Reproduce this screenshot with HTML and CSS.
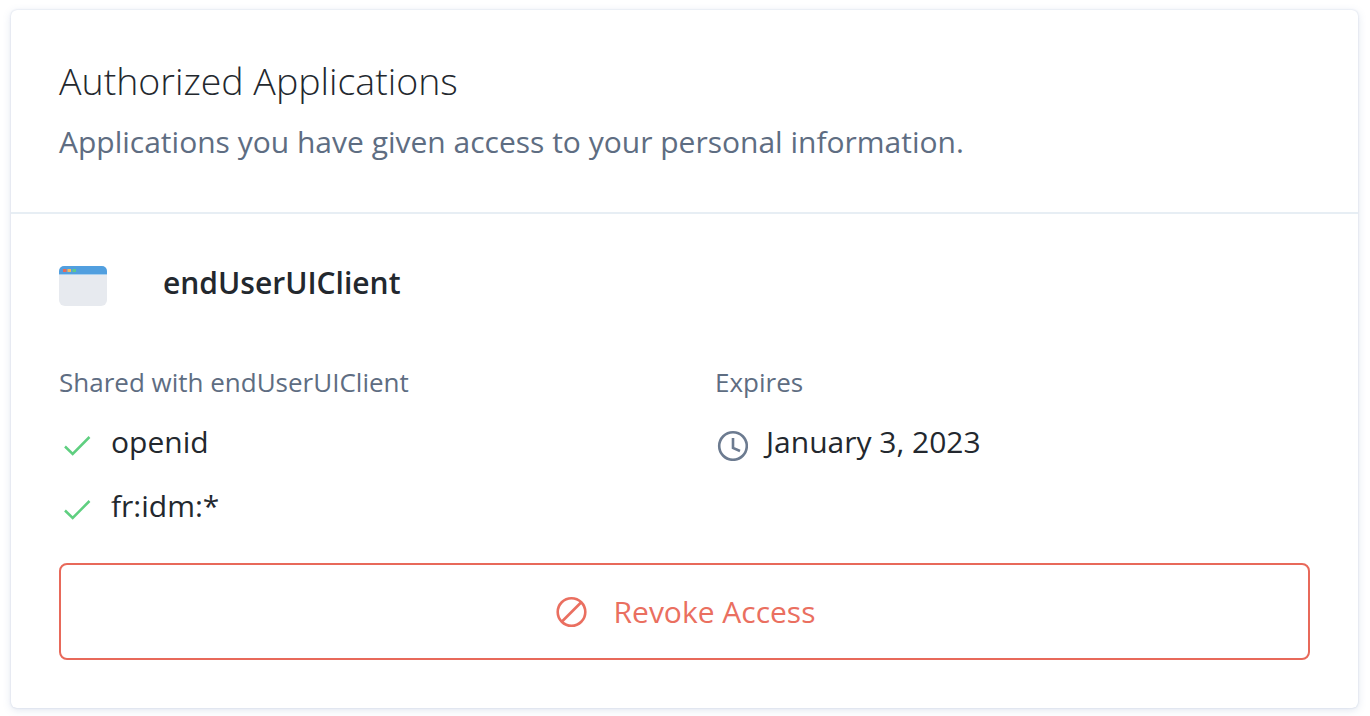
FILE: index.html
```html
<!DOCTYPE html>
<html>
    <head>
        <meta charset="utf-8">
        <title>Authorized Applications</title>
        <link rel="stylesheet" href="styles.css">
    </head>
    <body>
        <div class="card">
            <div class="card-header">
                <h1>Authorized Applications</h1>
                <p>Applications you have given access to your personal information.</p>
            </div>
            <div class="card-body">
                <div class="app">
                    <svg class="app-icon" width="48" height="40" viewBox="0 0 48 40">
                        <path fill="#e7eaef" d="M0 9h48v25a6 6 0 0 1-6 6H6a6 6 0 0 1-6-6z"/>
                        <path fill="#519fdf" d="M0 8.500V5a5 5 0 0 1 5-5h38a5 5 0 0 1 5 5v3.500z"/>
                        <rect x="4" y="3" width="3.500" height="3" fill="#e8695a"/>
                        <rect x="8.500" y="3" width="3.500" height="3" fill="#f0b75e"/>
                        <rect x="13.500" y="3" width="3.500" height="3" fill="#5fc98a"/>
                    </svg>
                    <h2>endUserUIClient</h2>
                </div>
                <div class="details">
                    <div class="col">
                        <div class="label">Shared with endUserUIClient</div>
                        <div class="row row-scope">
                            <svg class="check" width="32" height="30" viewBox="0 0 32 30"><path d="M6 19.500l7.700 7.500L30.500 10"/></svg>
                            <span>openid</span>
                        </div>
                        <div class="row row-scope">
                            <svg class="check" width="32" height="30" viewBox="0 0 32 30"><path d="M6 19.500l7.700 7.500L30.500 10"/></svg>
                            <span>fr:idm:*</span>
                        </div>
                    </div>
                    <div class="col">
                        <div class="label">Expires</div>
                        <div class="row row-date">
                            <svg class="clock" width="33" height="38" viewBox="0 0 33 38"><circle cx="18" cy="23" r="13.800"/><path d="M18 15v10l7 3"/></svg>
                            <span>January 3, 2023</span>
                        </div>
                    </div>
                </div>
                <button class="revoke">
                    <svg width="32" height="32" viewBox="0 0 32 32"><circle cx="15.500" cy="16" r="13.800"/><path d="M6 25.500l19-19"/></svg>
                    <span>Revoke Access</span>
                </button>
            </div>
        </div>
    </body>
</html>
```

FILE: styles.css
```css
body {
    margin: 0;
    background-color: #fff;
    color: #23282e;
    font-family: "Open Sans", sans-serif;
    padding: 10px 12px 8px 11px;
}
h1, h2, p {
    margin: 0;
}
.card {
    height: 698px;
    box-sizing: border-box;
    border-radius: 6px;
    background-color: #fff;
    box-shadow: 0 0 2px rgba(100, 125, 175, .28), 0 2px 8px rgba(100, 125, 175, .2);
}
.card-header {
    height: 204px;
    box-sizing: border-box;
    padding: 49px 48px 0;
    border-bottom: 2px solid #e7eef4;
}
.card-header h1 {
    font-size: 37.500px;
    font-weight: 300;
    line-height: 44px;
}
.card-header p {
    margin-top: 19px;
    font-size: 30px;
    line-height: 40px;
    color: #5e6d82;
}
.card-body {
    padding: 52px 48px 0;
}
.app {
    display: flex;
    align-items: flex-start;
    gap: 56px;
}
.app h2 {
    margin-top: -3px;
    font-size: 30px;
    font-weight: 600;
    line-height: 40px;
}
.details {
    display: flex;
    margin-top: 58px;
}
.col {
    flex: 0 0 656px;
}
.label {
    font-size: 26px;
    line-height: 36px;
    color: #5e6d82;
}
.row {
    display: flex;
    align-items: center;
    font-size: 30px;
    line-height: 40px;
}
.row-scope {
    gap: 20px;
    margin-top: 22px;
}
.row-date {
    gap: 18px;
    margin-top: 22px;
}
.row-scope + .row-scope {
    margin-top: 24px;
}
.check path {
    fill: none;
    stroke: #5fcf80;
    stroke-width: 2.500;
}
.clock circle, .clock path {
    fill: none;
    stroke: #6c7b90;
    stroke-width: 2.600;
}
.revoke {
    display: flex;
    align-items: center;
    justify-content: center;
    gap: 26px;
    width: 100%;
    height: 97px;
    margin-top: 37px;
    padding: 0 0 0 2px;
    border: 2px solid #e8695a;
    border-radius: 8px;
    background-color: #fff;
    color: #ea6f60;
    font-family: "Open Sans", sans-serif;
    font-size: 30px;
}
.revoke circle, .revoke path {
    fill: none;
    stroke: #ea6f60;
    stroke-width: 2.600;
}
```
